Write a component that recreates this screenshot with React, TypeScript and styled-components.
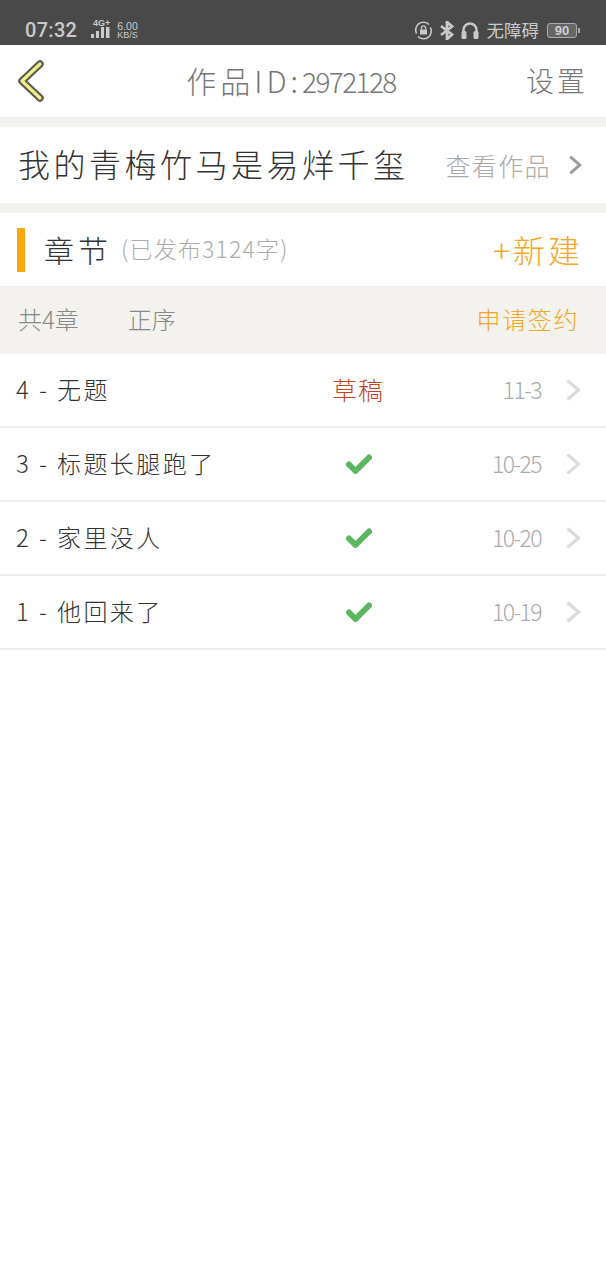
import React from "react";
import styled, { createGlobalStyle } from "styled-components";

const Global = createGlobalStyle`
  html, body { margin: 0; padding: 0; background: #fff; }
  body { font-family: "Noto Sans CJK SC", "Noto Sans", sans-serif; font-weight: 300; }
`;

const Page = styled.div`width: 606px; min-height: 1280px; background: #fff; display: flex; flex-direction: column;`;
const StatusBar = styled.div`
  height: 45px; box-sizing: border-box; background: #494949; color: #c9c9c9;
  display: flex; align-items: flex-end; justify-content: space-between; padding: 0 29px 1px 25px;
`;
const StatusGroup = styled.div<{ $gap: number }>`display: flex; align-items: center; gap: ${p => p.$gap}px; height: 28px;`;
const Clock = styled.span`font: 500 20px "Roboto", "Liberation Sans", sans-serif; color: #c9c9c9; letter-spacing: .3px;`;
const Speed = styled.span`
  display: flex; flex-direction: column; align-items: center;
  font: 400 9px/9px "Liberation Sans", sans-serif; margin-top: 1px; margin-left: -6px;
  & > span:first-child { font-size: 10.5px; }
`;
const Carrier = styled.span`font: 400 17.5px/1 "Noto Sans CJK SC", sans-serif; color: #c9c9c9; margin-left: 2px;`;
const Battery = styled.span`
  width: 28px; height: 13px; border: 1px solid #aaa; border-radius: 3px; position: relative;
  margin-left: 2px; display: flex; align-items: center; justify-content: center;
  font: 700 13px/1 "Liberation Sans", sans-serif; color: #cfcfcf; background: #666;
  &::after { content: ""; position: absolute; right: -4px; top: 4px; width: 2px; height: 5px; background: #aaa; }
`;

const NavBar = styled.header`
  height: 72px; background: #fff; display: grid; grid-template-columns: 1fr auto 1fr; align-items: center; padding: 0 18px 0 17px;
  border-bottom: 2px solid #ededea;
`;
const NavTitle = styled.div`
  font-size: 30px; line-height: 1; color: #777; letter-spacing: 4px; white-space: nowrap; padding-right: 23px; padding-bottom: 3px;
`;
const NavDigits = styled.span`font-size: 28px; letter-spacing: -1.6px;`;
const NavAction = styled.div`justify-self: end; font-size: 28px; line-height: 1; color: #777; letter-spacing: 3px; padding-bottom: 3px;`;

const Spacer = styled.div<{ $h: number }>`height: ${p => p.$h}px; background: #f3f2ee;`;

const WorkRow = styled.div`height: 76px; display: flex; align-items: center; justify-content: space-between; padding: 0 24px 0 18px; background: #fff;`;
const WorkName = styled.div`font-size: 32px; line-height: 1; color: #333; letter-spacing: 3.5px; white-space: nowrap; padding-bottom: 4px;`;
const WorkLink = styled.div`display: flex; align-items: center; gap: 17px; font-size: 25px; line-height: 1; color: #aaa; letter-spacing: 1.4px;`;

const SectionRow = styled.div`
  height: 74px; box-sizing: border-box; display: flex; align-items: center; padding: 0 23px 0 17px; background: #fff; border-bottom: 1px solid #ecebe7;
`;
const Marker = styled.span`width: 8px; height: 44px; background: #fca80c; margin-right: 19px;`;
const SectionTitle = styled.span`font-size: 30px; line-height: 1; color: #333; letter-spacing: 4px; margin-right: 9px; padding-bottom: 2px;`;
const SectionMeta = styled.span`font-size: 23px; line-height: 1; color: #aaa; letter-spacing: 1.2px; padding-bottom: 2px;`;
const NewButton = styled.span`margin-left: auto; font-size: 32px; line-height: 1; color: #f5a623; letter-spacing: 3px; white-space: nowrap; padding-bottom: 2px;`;

const ToolRow = styled.div`
  height: 67px; box-sizing: border-box; display: flex; align-items: center; gap: 49px; padding: 0 27px 3px 18px; background: #f3f2ee;
  font-size: 24px; line-height: 1; color: #888;
`;
const ToolSign = styled.span`margin-left: auto; color: #f5a623; letter-spacing: 1.6px;`;

const Row = styled.div`
  height: 74px; box-sizing: border-box; display: grid; grid-template-columns: 292px 100px 133px 1fr; align-items: center;
  padding-left: 16px; padding-right: 25px; background: #fff; border-bottom: 2px solid #eeeeee;
`;
const RowTitle = styled.div`font-size: 24px; line-height: 1; color: #333; letter-spacing: 2.4px; white-space: nowrap; padding-bottom: 2px;`;
const RowState = styled.div`display: flex; justify-content: center; font-size: 25px; line-height: 1; color: #c2451e; letter-spacing: 1px; padding-bottom: 1px;`;
const RowDate = styled.div`font-size: 23px; line-height: 1; color: #aaa; text-align: right; letter-spacing: -1.6px; padding-bottom: 2px;`;
const RowArrow = styled.div`display: flex; justify-content: flex-end;`;

const Chevron = ({ color, w = 16, h = 24, sw = 3.4 }: { color: string; w?: number; h?: number; sw?: number }) => (
  <svg width={w} height={h} viewBox="0 0 16 24" fill="none"><path d="M2.5 2.5 13.5 12 2.5 21.5" stroke={color} strokeWidth={sw} /></svg>
);
const Check = () => (
  <svg width="28" height="22" viewBox="0 0 28 22" fill="none"><path d="M5 11.5 11.5 18 25 4.5" stroke="#5cb660" strokeWidth="6" strokeLinecap="round" strokeLinejoin="round" /></svg>
);

const rows = [
  { title: "4 - 无题", date: "11-3", draft: true },
  { title: "3 - 标题长腿跑了", date: "10-25" },
  { title: "2 - 家里没人", date: "10-20" },
  { title: "1 - 他回来了", date: "10-19" },
];

export default function App() {
  return (
    <Page>
      <Global />
      <StatusBar>
        <StatusGroup $gap={11}>
          <Clock>07:32</Clock>
          <svg width="24" height="20" viewBox="0 0 24 20" fill="#c9c9c9" style={{ marginTop: -2 }}>
            <text x="5" y="7" fontSize="9" fontWeight="700" fontFamily="Liberation Sans">4G+</text>
            <rect x="3" y="15" width="3" height="4" /><rect x="8" y="12" width="3" height="7" /><rect x="13" y="8" width="3" height="11" /><rect x="18" y="8" width="3.5" height="11" />
          </svg>
          <Speed><span>6.00</span><span>KB/S</span></Speed>
        </StatusGroup>
        <StatusGroup $gap={6}>
          <svg width="19" height="19" viewBox="0 0 19 19" fill="none" stroke="#c9c9c9" strokeWidth="1.6">
            <path d="M2.5 12.5A7.8 7.8 0 0 1 15 3.5M16.5 6.5A7.8 7.8 0 0 1 4 15.5" />
            <rect x="6" y="8.5" width="7" height="5" fill="#c9c9c9" stroke="none" /><path d="M7.4 8.5V7a2.1 2.1 0 0 1 4.2 0v1.5" strokeWidth="1.3" />
          </svg>
          <svg width="16" height="19" viewBox="0 0 16 19" fill="none" stroke="#c9c9c9" strokeWidth="2.8"><path d="M2 5 13 13.5 8 18V1L13 5.5 2 14" /></svg>
          <svg width="18" height="19" viewBox="0 0 18 19" fill="none" stroke="#c9c9c9" strokeWidth="2.4"><path d="M2.5 12V9a6.5 6.5 0 0 1 13 0v3" /><rect x="0.5" y="10" width="5" height="8" rx="1.5" fill="#c9c9c9" stroke="none" /><rect x="12.5" y="10" width="5" height="8" rx="1.5" fill="#c9c9c9" stroke="none" /></svg>
          <Carrier>无障碍</Carrier>
          <Battery>90</Battery>
        </StatusGroup>
      </StatusBar>
      <NavBar>
        <svg width="28" height="44" viewBox="0 0 28 44" fill="none">
          <path d="M23 5 5 22 23 39" stroke="#5a5a52" strokeWidth="7.5" strokeLinecap="round" strokeLinejoin="round" />
          <path d="M23 5 5 22 23 39" stroke="#f3ee86" strokeWidth="3.2" strokeLinecap="round" strokeLinejoin="round" />
        </svg>
        <NavTitle>作品ID:<NavDigits>2972128</NavDigits></NavTitle>
        <NavAction>设置</NavAction>
      </NavBar>
      <Spacer $h={8} />
      <WorkRow>
        <WorkName>我的青梅竹马是易烊千玺</WorkName>
        <WorkLink>查看作品<Chevron color="#9c9c9c" w={14} h={22} /></WorkLink>
      </WorkRow>
      <Spacer $h={10} />
      <SectionRow>
        <Marker />
        <SectionTitle>章节</SectionTitle>
        <SectionMeta>(已发布3124字)</SectionMeta>
        <NewButton>+新建</NewButton>
      </SectionRow>
      <ToolRow>
        <span>共4章</span>
        <span>正序</span>
        <ToolSign>申请签约</ToolSign>
      </ToolRow>
      {rows.map(r => (
        <Row key={r.title}>
          <RowTitle>{r.title}</RowTitle>
          <RowState>{r.draft ? "草稿" : <Check />}</RowState>
          <RowDate>{r.date}</RowDate>
          <RowArrow><Chevron color="#dcdcdc" /></RowArrow>
        </Row>
      ))}
    </Page>
  );
}
